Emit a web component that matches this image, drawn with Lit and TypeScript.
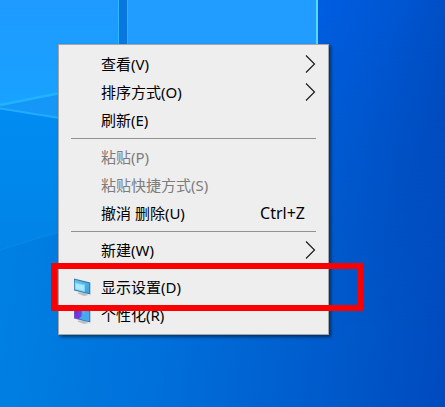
import { LitElement, html, css, svg, nothing } from "lit";
import { customElement, property } from "lit/decorators.js";

type Icon = "display" | "personalize";

interface Entry {
  label: string;
  submenu?: boolean;
  disabled?: boolean;
  shortcut?: string;
  icon?: Icon;
  marked?: boolean;
}

const groups: Entry[][] = [
  [
    { label: "查看(V)", submenu: true },
    { label: "排序方式(O)", submenu: true },
    { label: "刷新(E)" },
  ],
  [
    { label: "粘贴(P)", disabled: true },
    { label: "粘贴快捷方式(S)", disabled: true },
    { label: "撤消 删除(U)", shortcut: "Ctrl+Z" },
  ],
  [{ label: "新建(W)", submenu: true }],
  [
    { label: "显示设置(D)", icon: "display", marked: true },
    { label: "个性化(R)", icon: "personalize" },
  ],
];

const icons = {
  display: svg`
    <defs>
      <linearGradient id="screen" x1="0" y1="0" x2="1" y2="1">
        <stop offset="0" stop-color="#62c6f2" /><stop offset="1" stop-color="#3a9fdc" />
      </linearGradient>
    </defs>
    <path d="M5 14.5 L11 14.5 L15.5 17 L11 17.9 L5 15.8Z" fill="#b9bec3" />
    <path d="M1 0.5 L17.3 4.5 V16.5 L1 12.5Z" fill="#3a7ba8" />
    <path d="M1.8 1.8 L16.2 5.4 V15.2 L1.8 11.6Z" fill="url(#screen)" />
    <path d="M1.8 4.2 L12 6.6 V14.1 L1.8 11.6Z" fill="#7dd4f6" />
    <path d="M2.8 5.6 L11 7.5 V12.8 L2.8 10.8Z" fill="#a9e9fb" />`,
  personalize: svg`
    <defs>
      <linearGradient id="theme" x1="0" y1="0" x2="1" y2="0">
        <stop offset="0" stop-color="#8b20d8" /><stop offset="0.4" stop-color="#5b4be4" />
        <stop offset="0.6" stop-color="#58b6f4" /><stop offset="1" stop-color="#2586d6" />
      </linearGradient>
    </defs>
    <path d="M5 14.5 L11 14.5 L15.5 17 L11 17.9 L5 15.8Z" fill="#b9bec3" />
    <path d="M1 0.5 L17.3 4.5 V16.5 L1 12.5Z" fill="#4474b8" />
    <path d="M1.8 1.8 L16.2 5.4 V15.2 L1.8 11.6Z" fill="url(#theme)" />
    <path d="M6 12.4 L14 5.2 L16.2 5.6 V15.2Z" fill="#47a8ee" />
    <path d="M1.8 7 L6.5 12.6 L1.8 11.6Z" fill="#a321df" />`,
};

@customElement("menu-entry")
class MenuEntry extends LitElement {
  @property({ attribute: false }) entry!: Entry;

  static styles = css`
    :host { display: block; position: relative; }
    .row {
      display: flex; align-items: center; width: 100%; height: 28px;
      margin: 0; padding: 0 12px 2px 14px; border: 0; background: none;
      font: 15px/26px "Noto Sans", "Noto Sans CJK SC", sans-serif;
      color: #000; text-align: left; white-space: nowrap;
    }
    .row:disabled { color: #7c7c7c; }
    .slot { flex: none; width: 28px; height: 18px; }
    .icon { display: block; width: 18px; height: 18px; }
    .label { flex: 1; }
    .shortcut { font-size: 16px; padding-right: 11px; }
    .arrow { width: 12px; height: 18px; fill: none; stroke: #1c1c1c; stroke-width: 1.2; }
    .mark {
      position: absolute; inset: -11px -35px -9px -8px; z-index: 1;
      border: 6px solid #fb0000; pointer-events: none;
    }
  `;

  render() {
    const e = this.entry;
    return html`
      <button class="row" role="menuitem" ?disabled=${e.disabled}>
        <span class="slot">
          ${e.icon
            ? html`<svg class="icon" viewBox="0 0 18 18" aria-hidden="true">${icons[e.icon]}</svg>`
            : nothing}
        </span>
        <span class="label">${e.label}</span>
        ${e.shortcut ? html`<span class="shortcut">${e.shortcut}</span>` : nothing}
        ${e.submenu
          ? html`<svg class="arrow" viewBox="0 0 12 18" aria-hidden="true"><path d="M2 0.5 L10.5 9 L2 17.5" /></svg>`
          : nothing}
      </button>
      ${e.marked ? html`<div class="mark"></div>` : nothing}
    `;
  }
}

@customElement("app-root")
class AppRoot extends LitElement {
  static styles = css`
    :host { display: block; position: relative; min-height: 100vh; overflow: hidden; background: #0058cc; }
    .wallpaper { position: absolute; inset: 0; width: 100%; height: 100%; }
    .menu {
      position: absolute; left: 58px; top: 44px; width: 271px; box-sizing: border-box;
      padding: 6px 0 4px; background: #eeeeee; border: 1px solid #a6a6a6;
      box-shadow: 2px 2px 3px rgba(0, 0, 0, 0.5);
    }
    .divider { height: 1px; margin: 3px 12px 5px; border: 0; background: #919191; }
  `;

  render() {
    return html`
      <svg class="wallpaper" viewBox="0 0 445 407" preserveAspectRatio="xMinYMin slice" aria-hidden="true">
        <defs>
          <linearGradient id="dark" gradientUnits="userSpaceOnUse" x1="318" y1="0" x2="460" y2="50">
            <stop offset="0" stop-color="#005ee2" /><stop offset="0.5" stop-color="#0056d2" />
            <stop offset="1" stop-color="#004abe" />
          </linearGradient>
          <linearGradient id="pane" x1="0" y1="0" x2="0" y2="1">
            <stop offset="0" stop-color="#1e9aff" /><stop offset="1" stop-color="#18a2ff" />
          </linearGradient>
          <linearGradient id="floor" gradientUnits="userSpaceOnUse" x1="0" y1="340" x2="445" y2="400">
            <stop offset="0" stop-color="#0080e2" /><stop offset="0.35" stop-color="#0070da" />
            <stop offset="0.7" stop-color="#005ccc" /><stop offset="1" stop-color="#004abe" />
          </linearGradient>
          <linearGradient id="fade" x1="0" y1="0" x2="0" y2="1">
            <stop offset="0" stop-color="#fff" /><stop offset="0.8" stop-color="#000" />
          </linearGradient>
          <mask id="fall"><rect x="318" width="127" height="407" fill="url(#fade)" /></mask>
          <linearGradient id="lower" gradientUnits="userSpaceOnUse" x1="0" y1="110" x2="0" y2="250">
            <stop offset="0" stop-color="#008cf2" /><stop offset="1" stop-color="#0083e5" />
          </linearGradient>
        </defs>
        <rect width="445" height="407" fill="url(#floor)" />
        <rect x="318" width="127" height="407" fill="url(#dark)" mask="url(#fall)" />
        <path d="M0 108 L120 122 V216 L0 250Z" fill="url(#lower)" />
        <path d="M0 250 L60 231" stroke="#1a8fe8" opacity="0.4" />
        <path d="M0 0 H119 V80 L0 105Z" fill="url(#pane)" />
        <path d="M0 105 L60 93 V118 L0 109Z" fill="#1597f8" />
        <path d="M0 105 L60 93" fill="none" stroke="#20b3ff" stroke-width="2.5" />
        <path d="M0 108.5 L60 118" fill="none" stroke="#22acff" stroke-width="2" />
        <rect x="119" width="8" height="60" fill="#0878df" />
        <rect x="118" width="1" height="60" fill="#2fb8ff" />
        <rect x="127" width="189" height="60" fill="#219dff" />
        <rect x="127" width="1" height="60" fill="#2fb0ff" />
        <rect x="316" width="2" height="60" fill="#52dcff" />
      </svg>
      <div class="menu" role="menu">
        ${groups.map(
          (group, i) => html`
            ${i ? html`<hr class="divider" />` : nothing}
            ${group.map((entry) => html`<menu-entry .entry=${entry}></menu-entry>`)}
          `
        )}
      </div>
    `;
  }
}
